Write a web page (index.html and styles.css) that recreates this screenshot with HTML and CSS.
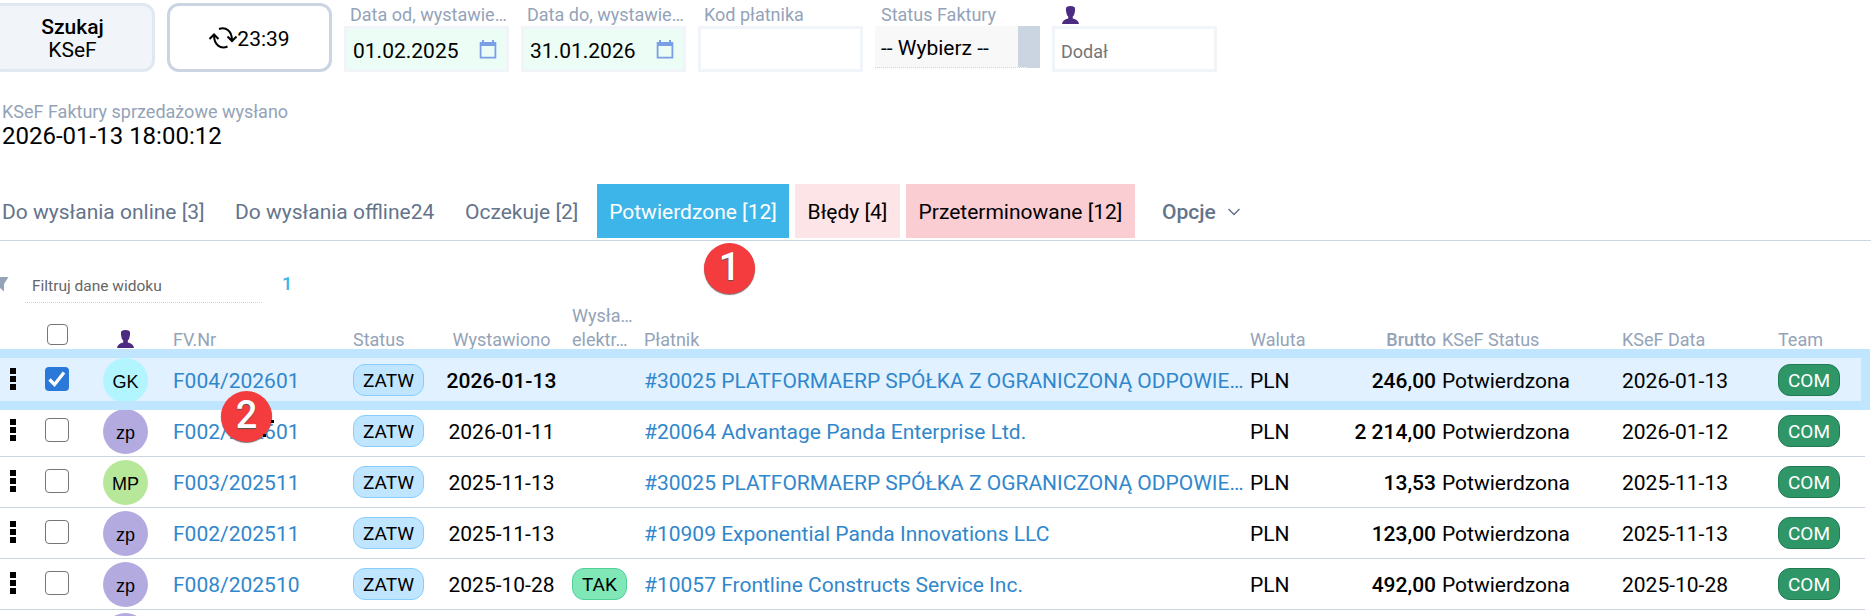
FILE: index.html
```html
<!DOCTYPE html>
<html lang="pl">
<head>
    <meta charset="UTF-8">
    <title>KSeF Faktury</title>
    <link rel="stylesheet" href="styles.css">
</head>
<body>
    <svg class="symbols" width="0" height="0">
        <symbol id="calendar" viewBox="0 0 18 19">
            <path fill="none" stroke="#7b9fe6" stroke-width="1.8" d="M1.6 3h14.8v14.6H1.6z"/>
            <path fill="#7b9fe6" d="M1 2h16v4H1zM3 0h2v3H3zM13 0h2v3h-2z"/>
        </symbol>
        <symbol id="person" viewBox="0 0 17 18">
            <path fill="#4b2c82" d="M4.5 1Q8.500-1 12.500 1Q13.500 3 12.800 6Q12.500 9 10.800 10.500V12.500Q16.500 13.500 17 18H0Q.5 13.500 6.200 12.500V10.500Q4.500 9 4.200 6Q3.500 3 4.500 1Z"/>
        </symbol>
    </svg>

    <div class="toolbar">
        <button class="btn btn-search"><b>Szukaj</b><span>KSeF</span></button>
        <button class="btn btn-refresh">
            <svg width="28" height="22" viewBox="0 0 28 22" fill="none" stroke="#000" stroke-width="2">
                <path d="M10 2C17-.5 23 4 23 13.500M18.500 9.500l4.500 4.500 4.500-4.500M18.500 19.500C11.500 22.500 5 18 5 8M.5 12L5 7.500l4.500 4.500"/>
            </svg>
            <span>23:39</span>
        </button>
        <div class="field">
            <label>Data od, wystawie…</label>
            <div class="input date"><span>01.02.2025</span><svg width="18" height="19"><use href="#calendar"/></svg></div>
        </div>
        <div class="field">
            <label>Data do, wystawie…</label>
            <div class="input date"><span>31.01.2026</span><svg width="18" height="19"><use href="#calendar"/></svg></div>
        </div>
        <div class="field">
            <label>Kod płatnika</label>
            <div class="input"></div>
        </div>
        <div class="field">
            <label>Status Faktury</label>
            <div class="select"><span>-- Wybierz --</span></div>
        </div>
        <div class="field">
            <label class="icon-label"><svg class="person" width="17" height="18"><use href="#person"/></svg></label>
            <div class="input placeholder">Dodał</div>
        </div>
    </div>

    <div class="sent">
        <div class="sent-label">KSeF Faktury sprzedażowe wysłano</div>
        <div class="sent-date">2026-01-13 18:00:12</div>
    </div>

    <div class="tabs">
        <a class="tab tab-online">Do wysłania online [3]</a>
        <a class="tab tab-offline">Do wysłania offline24</a>
        <a class="tab tab-waiting">Oczekuje [2]</a>
        <a class="tab tab-active">Potwierdzone [12]<span class="marker marker-1">1</span></a>
        <a class="tab tab-errors">Błędy [4]</a>
        <a class="tab tab-overdue">Przeterminowane [12]</a>
        <a class="tab tab-options">Opcje
            <svg width="12" height="8" viewBox="0 0 12 8" fill="none" stroke="#64748b" stroke-width="1.5"><path d="M.5 1L6 6.500 11.500 1"/></svg>
        </a>
    </div>

    <div class="filter">
        <svg width="9" height="15" viewBox="0 0 9 15"><path fill="#94a3b8" d="M0 0h8.5L4 7v7.500L0 11z"/></svg>
        <div class="filter-input">Filtruj dane widoku</div>
        <span class="filter-count">1</span>
    </div>

    <div class="grid">
        <div class="row head">
            <span></span>
            <span><i class="check check-all"></i></span>
            <span><svg class="person" width="17" height="18"><use href="#person"/></svg></span>
            <span>FV.Nr</span>
            <span>Status</span>
            <span class="issued">Wystawiono</span>
            <span>Wysła…<br>elektr…</span>
            <span>Płatnik</span>
            <span>Waluta</span>
            <span class="amount">Brutto</span>
            <span>KSeF Status</span>
            <span>KSeF Data</span>
            <span>Team</span>
        </div>
        <div class="row selected">
            <i class="dots"></i>
            <span><i class="check checked"><svg width="24" height="24" viewBox="0 0 24 24" fill="none" stroke="#fff" stroke-width="3.2"><path d="M4.5 12.500l5 5L19 5.500"/></svg></i></span>
            <span class="avatar cyan">GK</span>
            <a>F004/202601</a>
            <em class="tag blue">ZATW</em>
            <span class="issued bold">2026-01-13</span>
            <span></span>
            <a>#30025 PLATFORMAERP SPÓŁKA Z OGRANICZONĄ ODPOWIE…</a>
            <span>PLN</span>
            <span class="amount">246,00</span>
            <span>Potwierdzona</span>
            <span>2026-01-13</span>
            <em class="tag team">COM</em>
        </div>
        <div class="row">
            <i class="dots"></i>
            <span><i class="check"></i></span>
            <span class="avatar violet">zp</span>
            <a class="with-marker">F002/202601<span class="marker marker-2">2</span></a>
            <em class="tag blue">ZATW</em>
            <span class="issued">2026-01-11</span>
            <span></span>
            <a>#20064 Advantage Panda Enterprise Ltd.</a>
            <span>PLN</span>
            <span class="amount">2 214,00</span>
            <span>Potwierdzona</span>
            <span>2026-01-12</span>
            <em class="tag team">COM</em>
        </div>
        <div class="row">
            <i class="dots"></i>
            <span><i class="check"></i></span>
            <span class="avatar green">MP</span>
            <a>F003/202511</a>
            <em class="tag blue">ZATW</em>
            <span class="issued">2025-11-13</span>
            <span></span>
            <a>#30025 PLATFORMAERP SPÓŁKA Z OGRANICZONĄ ODPOWIE…</a>
            <span>PLN</span>
            <span class="amount">13,53</span>
            <span>Potwierdzona</span>
            <span>2025-11-13</span>
            <em class="tag team">COM</em>
        </div>
        <div class="row">
            <i class="dots"></i>
            <span><i class="check"></i></span>
            <span class="avatar violet">zp</span>
            <a>F002/202511</a>
            <em class="tag blue">ZATW</em>
            <span class="issued">2025-11-13</span>
            <span></span>
            <a>#10909 Exponential Panda Innovations LLC</a>
            <span>PLN</span>
            <span class="amount">123,00</span>
            <span>Potwierdzona</span>
            <span>2025-11-13</span>
            <em class="tag team">COM</em>
        </div>
        <div class="row">
            <i class="dots"></i>
            <span><i class="check"></i></span>
            <span class="avatar violet">zp</span>
            <a>F008/202510</a>
            <em class="tag blue">ZATW</em>
            <span class="issued">2025-10-28</span>
            <em class="tag yes">TAK</em>
            <a>#10057 Frontline Constructs Service Inc.</a>
            <span>PLN</span>
            <span class="amount">492,00</span>
            <span>Potwierdzona</span>
            <span>2025-10-28</span>
            <em class="tag team">COM</em>
        </div>
        <div class="row">
            <span></span>
            <span></span>
            <span class="avatar violet"></span>
        </div>
    </div>
</body>
</html>
```
FILE: styles.css
```css
* {
    box-sizing: border-box;
}
body {
    margin: 0;
    height: 616px;
    overflow: hidden;
    background: #fff;
    color: #000;
    font-family: Roboto, sans-serif;
    font-size: 21px;
}
.symbols {
    position: absolute;
}
svg {
    display: block;
    flex: none;
}

/* Toolbar */
.toolbar {
    display: flex;
    gap: 12px;
    height: 72px;
    padding-top: 3px;
}
.btn {
    height: 69px;
    width: 165px;
    padding: 0;
    border: 3px solid #cbd5e1;
    border-radius: 12px;
    background: #fff;
    color: #000;
    font: 21px/23px Roboto, sans-serif;
    display: flex;
    align-items: center;
    justify-content: center;
}
.btn-search {
    margin-left: -10px;
    padding-top: 2px;
    flex-direction: column;
    background: #f1f5f9;
    border-color: #e2e8f0;
}
.btn-search b {
    font-weight: 500;
}
.btn-refresh span {
    padding-top: 3px;
}
.field {
    width: 165px;
}
.field label {
    display: block;
    height: 23px;
    padding-left: 6px;
    font-size: 18px;
    line-height: 24px;
    color: #94a3b8;
    white-space: nowrap;
}
.field .icon-label {
    padding: 3px 0 0 10px;
}
.input {
    height: 46px;
    border: 3px solid #f1f5f9;
    padding: 4px 6px 0;
    display: flex;
    align-items: center;
}
.input.placeholder {
    font-size: 18px;
    color: #757575;
}
.date {
    justify-content: space-between;
    background: #ecfdf5;
    padding-right: 9px;
}
.date svg {
    margin-top: -4px;
}
.select {
    height: 42px;
    border-bottom: 1px dotted #cbd5e1;
    border-right: 22px solid #cbd5e1;
    background: #f8f8f8;
    padding-left: 6px;
    line-height: 45px;
}

/* Last sent date */
.sent {
    padding: 29px 0 0 2px;
}
.sent-label {
    font-size: 18px;
    line-height: 21px;
    color: #94a3b8;
}
.sent-date {
    font-size: 24px;
    line-height: 28px;
}

/* Tabs */
.tabs {
    display: flex;
    margin-top: 34px;
    height: 57px;
    border-bottom: 1px solid #cbd5e1;
}
.tab {
    height: 54px;
    line-height: 57px;
    color: #64748b;
    white-space: nowrap;
}
.tab-online {
    width: 235px;
    padding-left: 2px;
}
.tab-offline {
    width: 230px;
}
.tab-waiting {
    width: 132px;
}
.tab-active {
    position: relative;
    width: 192px;
    text-align: center;
    background: #3eb5e8;
    color: #fff;
}
.tab-errors {
    width: 105px;
    margin-left: 6px;
    text-align: center;
    background: #fde4e7;
    color: #000;
}
.tab-overdue {
    width: 229px;
    margin: 0 27px 0 6px;
    text-align: center;
    background: #facdd2;
    color: #000;
}
.tab-options {
    display: flex;
    align-items: center;
    gap: 12px;
    padding-top: 2px;
    font-weight: 500;
}

/* Step markers lying over the page */
.marker {
    position: absolute;
    z-index: 3;
    width: 51px;
    height: 51px;
    border-radius: 50%;
    background: #f43b3e;
    box-shadow: 0 1px 1px #777;
    color: #fff;
    font-size: 38px;
    font-weight: 500;
    line-height: 49px;
    text-align: center;
    text-shadow: 0 1px 1px #555;
}
.marker-1 {
    left: 107px;
    top: 59px;
}
.marker-2 {
    left: 48px;
    top: -29px;
}
.marker-2::after {
    content: "";
    position: absolute;
    right: -2px;
    top: 29px;
    width: 3px;
    height: 3px;
    background: #000;
    box-shadow: -8px 14px #000;
}

/* View filter */
.filter {
    display: flex;
    height: 62px;
    padding-top: 36px;
}
.filter-input {
    width: 237px;
    height: 26px;
    margin-left: 16px;
    padding-left: 7px;
    border-bottom: 1px dotted #cbd5e1;
    font-size: 15.5px;
    line-height: 18px;
    color: #666;
}
.filter-count {
    margin-left: 20px;
    font-size: 18px;
    line-height: 14px;
    font-weight: 500;
    color: #3eb5e8;
}

/* Invoice list */
.grid {
    height: 313px;
    overflow: hidden;
}
.row {
    display: grid;
    grid-template-columns: 33px 68px 72px 180px 90px 129px 72px 606px 92px 100px 180px 156px 87px;
    align-items: center;
    width: 1865px;
    height: 51px;
    padding-top: 2px;
    border-bottom: 1px solid #cbd5e1;
    white-space: nowrap;
}
.head {
    height: 52px;
    align-items: end;
    border: 0;
    padding: 0 0 3px;
    font-size: 18px;
    line-height: 24px;
    color: #94a3b8;
}
.head .person {
    margin: 0 0 4px 16px;
}
.row a {
    color: #3187cc;
}
.issued {
    padding-right: 12px;
    text-align: center;
}
.bold {
    font-weight: 500;
}
.amount {
    padding-right: 6px;
    text-align: right;
    font-weight: 500;
}
.with-marker {
    position: relative;
}
.selected {
    position: relative;
    background: #e1f1ff;
}
.selected::after {
    content: "";
    position: absolute;
    inset: -6px -5px -5px -9px;
    border: 9px solid #bfe5ff;
}
.dots {
    width: 6px;
    height: 22px;
    margin: -5px 0 0 10px;
    background: repeating-linear-gradient(#000 0 6px, transparent 6px 8px);
}
.check {
    display: block;
    width: 24px;
    height: 24px;
    margin: -4px 0 0 12px;
    border: 1px solid #767676;
    border-radius: 4px;
    background: #fff;
}
.check-all {
    width: 21px;
    height: 21px;
    margin: 0 0 7px 14px;
}
.checked {
    border: 0;
    background: #2a78d8;
}
.avatar {
    width: 45px;
    height: 45px;
    margin: -1px 0 0 2px;
    border-radius: 50%;
    font: 18px/48px "Liberation Sans", sans-serif;
    text-align: center;
}
.cyan {
    background: #b2f5ff;
}
.violet {
    background: #b3abe0;
}
.green {
    background: #b7e89a;
}
.tag {
    justify-self: start;
    height: 32px;
    margin-top: -2px;
    padding: 0 9px;
    border: 1px solid;
    border-radius: 12px;
    font-style: normal;
    font-size: 19px;
    line-height: 32px;
}
.blue {
    background: #bfe5ff;
    border-color: #87ceff;
}
.yes {
    background: #80e8b6;
    border-color: #50cf96;
}
.team {
    background: #2f9668;
    border-color: #217a52;
    color: #fff;
}
```
